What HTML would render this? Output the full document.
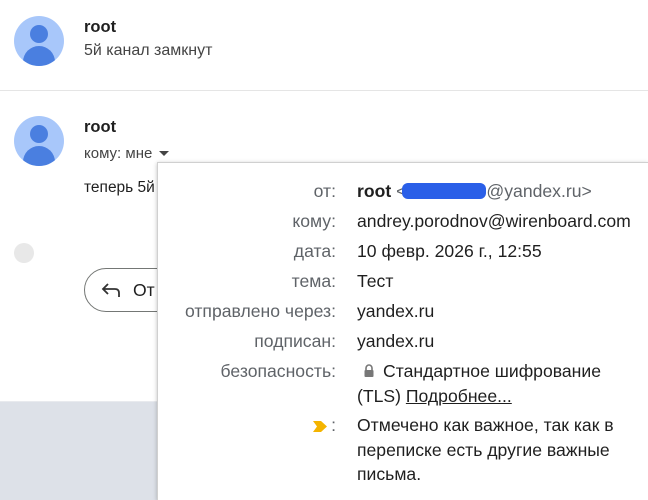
<!DOCTYPE html>
<html style="width:648px;height:500px;overflow:hidden"><head><meta charset="utf-8"><style>
*{margin:0;padding:0;box-sizing:border-box}
body{width:648px;height:500px;overflow:hidden;background:#fff;font-family:"Liberation Sans","Noto Sans CJK SC",sans-serif;color:#1f1f1f;position:relative}
.abs{position:absolute;white-space:nowrap}
.av{position:absolute;width:50px;height:50px;border-radius:50%;background:#a8c7fa;overflow:hidden}
.av .h{position:absolute;left:16px;top:9px;width:18px;height:18px;border-radius:50%;background:#4a7fe0}
.av .b{position:absolute;left:9px;top:30px;width:32px;height:22px;border-radius:16px 16px 0 0;background:#4a7fe0}
.name{font-weight:bold;font-size:16.5px}
.sub{font-size:16px;color:#444}
.pop{position:absolute;left:157px;top:162px;width:491px;height:338px;background:#fff;border-left:1px solid #d0d0d0;border-top:1px solid #d0d0d0;box-shadow:0 1px 4px rgba(0,0,0,.25)}
.l{position:absolute;right:312px;font-size:17.6px;color:#5f6368;white-space:nowrap;text-align:right}
.v{position:absolute;left:357px;font-size:17.6px;color:#1f1f1f;white-space:nowrap}
</style></head><body>
<div class="av" style="left:14px;top:16px"><div class="h"></div><div class="b"></div></div>
<div class="abs name" style="left:84px;top:18px">root</div>
<div class="abs sub" style="left:84px;top:42px">5й канал замкнут</div>
<div class="abs" style="left:0;top:90px;width:648px;height:1px;background:#e5e5e5"></div>
<div class="av" style="left:14px;top:116px"><div class="h"></div><div class="b"></div></div>
<div class="abs name" style="left:84px;top:118px">root</div>
<div class="abs sub" style="left:84px;top:145px;font-size:15px">кому: мне</div>
<div class="abs" style="left:159px;top:151px;width:0;height:0;border-left:5px solid transparent;border-right:5px solid transparent;border-top:5px solid #444"></div>
<div class="abs" style="left:84px;top:179px;font-size:15.5px">теперь 5й</div>
<div class="abs" style="left:14px;top:243px;width:20px;height:20px;border-radius:50%;background:#e8e8e8"></div>
<div class="abs" style="left:84px;top:268px;width:120px;height:44px;border:1px solid #747775;border-radius:22px"></div>
<svg class="abs" style="left:101px;top:281px" width="20" height="18" viewBox="0 0 20 18"><path d="M7 3 L2 8 L7 13 M2 8 H14 Q18 8 18 12 V16" fill="none" stroke="#333" stroke-width="1.8"/></svg>
<div class="abs" style="left:133px;top:280px;font-size:17.6px">От</div>
<div class="abs" style="left:0;top:402px;width:157px;height:98px;background:#dde1e8"></div>
<div class="abs" style="left:0;top:401px;width:157px;height:1px;background:#e8eaee"></div>
<div class="pop"></div>
<div class="l" style="top:181px">от:</div>
<div class="v" style="top:181px"><b>root</b> <span style="color:#5f6368">&lt;<span style="display:inline-block;width:84px;height:16px;background:#2a5fe8;border-radius:6px;vertical-align:-2px;margin-left:-4px"></span>@yandex.ru&gt;</span></div>
<div class="l" style="top:211px">кому:</div>
<div class="v" style="top:211px">andrey.porodnov@wirenboard.com</div>
<div class="l" style="top:241px">дата:</div>
<div class="v" style="top:241px">10 февр. 2026 г., 12:55</div>
<div class="l" style="top:271px">тема:</div>
<div class="v" style="top:271px">Тест</div>
<div class="l" style="top:301px">отправлено через:</div>
<div class="v" style="top:301px">yandex.ru</div>
<div class="l" style="top:331px">подписан:</div>
<div class="v" style="top:331px">yandex.ru</div>
<div class="l" style="top:361px">безопасность:</div>
<svg class="abs" style="left:363px;top:364px" width="12" height="14" viewBox="0 0 12 14"><path d="M3 6V4a3 3 0 0 1 6 0v2" fill="none" stroke="#777" stroke-width="1.6"/><rect x="1.5" y="6" width="9" height="7" rx="1" fill="#777"/></svg>
<div class="v" style="top:361px;left:383px">Стандартное шифрование</div>
<div class="v" style="top:386px">(TLS) <span style="text-decoration:underline">Подробнее...</span></div>
<svg class="abs" style="left:313px;top:421px" width="14" height="11" viewBox="0 0 14 11"><path d="M0 0H8L14 5.5L8 11H0L4 5.5Z" fill="#f4b400"/></svg>
<div class="l" style="top:415px">:</div>
<div class="v" style="top:415px">Отмечено как важное, так как в</div>
<div class="v" style="top:440px">переписке есть другие важные</div>
<div class="v" style="top:464px">письма.</div>
</body></html>
